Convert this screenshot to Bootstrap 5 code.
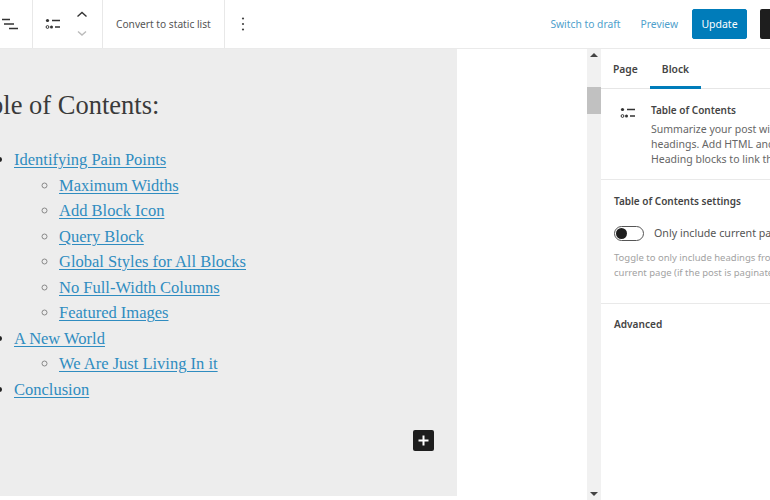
<!DOCTYPE html>
<html lang="en">
<head>
<meta charset="utf-8">
<title>Table of Contents</title>
<link href="https://cdn.jsdelivr.net/npm/bootstrap@5.3.0/dist/css/bootstrap.min.css" rel="stylesheet">
<style>
html,body{height:500px;overflow:hidden;background:#fff}
body{font-family:"Noto Sans",sans-serif;color:#333}
.top-bar{height:49px;border-bottom:1px solid #eaeaea;color:#444;overflow:hidden}
.tool-seg{height:48px;border-right:1px solid #e8e8e8}
.seg-nav{width:33px;padding-left:1px}
.seg-block{width:70px;padding-left:12px;gap:15px}
.seg-convert{width:122px;font-size:10.2px;padding:2px 0 0 13px;color:#555}
.seg-more{width:38px}
.top-link{font-size:10.3px;color:#4f9fcc;padding-top:2px}
.gap-link{margin-right:20px}
.btn.btn-update{background:#007cba;border-color:#007cba;color:#fff;font-size:10.5px;width:55px;height:30px;padding:1px 0 0;border-radius:2px;margin-left:14px}
.black-btn{width:30px;height:30px;background:#1e1e1e;border-radius:2px;margin-left:13px;margin-right:-20px;flex:none}
.work-area{height:451px}
.page-canvas{width:457px;height:447px;background:#ededed;overflow:hidden;flex:none;font-family:"Liberation Serif",serif;position:relative}
.doc-title{font-family:"Liberation Serif",serif;font-size:26.5px;font-weight:400;color:#3a3a3a;margin:42px 0 0 -36px;line-height:28px}
.toc-list{margin:28px 0 0;padding-left:14px;font-size:16.5px;line-height:25.5px}
.toc-list ul{padding-left:45px;margin:0;list-style:circle}
.toc-list li::marker{color:#222}
.toc-list ul li::marker{color:#888}
.toc-list a{color:#2f8cc0;text-decoration:underline;text-underline-offset:2px}
.add-block{position:absolute;left:413px;top:381px;width:21px;height:21px;background:#1e1e1e;border-radius:2px}
.blank-gap{width:130px;flex:none}
.scroll-track{width:14px;background:#f1f1f1;flex:none;height:451px}
.scroll-thumb{height:27px;background:#c1c1c1;margin-top:30px}
.side-panel{flex:1 1 0;min-width:0;overflow:hidden}
.side-inner{width:300px}
.tabs-row{height:40px;border-bottom:1px solid #e6e6e6;font-size:10.3px;font-weight:600;color:#444}
.tab-item{height:40px;line-height:40px}
.tab-page{padding-left:12px;width:49px}
.tab-block{width:51px;text-align:center;border-bottom:3px solid #007cba}
.block-card{height:91px;border-bottom:1px solid #e9e9e9;padding:14px 0 0 19px;gap:15px}
.card-name{font-size:10px;font-weight:600;color:#444;line-height:14px;margin-bottom:5px}
.card-desc{font-size:10.5px;line-height:15px;color:#666}
.settings-box{height:124px;border-bottom:1px solid #e9e9e9;padding:14px 0 0 13px}
.settings-name{font-size:10px;font-weight:600;color:#444;line-height:14px;margin-bottom:17px}
.toggle-pill{width:30px;height:15px;border:1px solid #555;border-radius:8px;flex:none;position:relative}
.toggle-pill::before{content:"";position:absolute;left:1px;top:1px;width:11px;height:11px;border-radius:50%;background:#1e1e1e}
.toggle-label{font-size:10.7px;color:#555;margin-left:10px;line-height:15px;padding-top:1px}
.help-text{font-size:9.5px;line-height:15px;color:#a2a2a2;margin-top:9px}
.adv-row{font-size:10.100px;font-weight:600;color:#444;padding:13px 0 0 13px;line-height:14px}
</style>
</head>
<body>
<div class="top-bar d-flex align-items-center">
  <div class="tool-seg seg-nav d-flex align-items-center">
    <svg width="18" height="14" viewBox="0 0 18 14" fill="none" stroke="#333" stroke-width="1.4"><path d="M1 2.500h8M3 7h10M8 11.500h9"/></svg>
  </div>
  <div class="tool-seg seg-block d-flex align-items-center">
    <svg width="16" height="12" viewBox="0 0 16 12" fill="none"><circle cx="2.500" cy="2.500" r="1.600" fill="#333"/><path d="M7 2.500h8M10 9h5" stroke="#333" stroke-width="1.300"/><circle cx="2.500" cy="9" r="1.400" stroke="#333"/><circle cx="6.500" cy="9" r="1.500" fill="#333"/></svg>
    <svg width="12" height="26" viewBox="0 0 12 26" fill="none" stroke-width="1.400"><path d="M1.500 5.500 6 1.500l4.500 4" stroke="#333"/><path d="M2 20.500l4 3.500 4-3.500" stroke="#bbb"/></svg>
  </div>
  <div class="tool-seg seg-convert d-flex align-items-center">Convert to static list</div>
  <div class="tool-seg seg-more d-flex align-items-center border-0 ps-3">
    <svg width="4" height="16" viewBox="0 0 4 16" fill="#444"><circle cx="2" cy="2.500" r="1.100"/><circle cx="2" cy="8" r="1.100"/><circle cx="2" cy="13.500" r="1.100"/></svg>
  </div>
  <div class="ms-auto d-flex align-items-center">
    <span class="top-link gap-link">Switch to draft</span>
    <span class="top-link">Preview</span>
    <button class="btn btn-update" type="button">Update</button>
    <span class="black-btn"></span>
  </div>
</div>
<div class="work-area d-flex">
  <div class="page-canvas">
    <h1 class="doc-title text-nowrap">Table of Contents:</h1>
    <ul class="toc-list">
      <li><a href="#">Identifying Pain Points</a>
        <ul>
          <li><a href="#">Maximum Widths</a></li>
          <li><a href="#">Add Block Icon</a></li>
          <li><a href="#">Query Block</a></li>
          <li><a href="#">Global Styles for All Blocks</a></li>
          <li><a href="#">No Full-Width Columns</a></li>
          <li><a href="#">Featured Images</a></li>
        </ul>
      </li>
      <li><a href="#">A New World</a>
        <ul>
          <li><a href="#">We Are Just Living In it</a></li>
        </ul>
      </li>
      <li><a href="#">Conclusion</a></li>
    </ul>
    <span class="add-block d-flex align-items-center justify-content-center">
      <svg width="11" height="11" viewBox="0 0 11 11" stroke="#fff" stroke-width="2"><path d="M5.500 0.500v10M0.500 5.500h10"/></svg>
    </span>
  </div>
  <div class="blank-gap"></div>
  <div class="scroll-track d-flex flex-column">
    <svg class="mx-auto mt-1" width="8" height="4" viewBox="0 0 8 4" fill="#444"><path d="M0 4 4 0l4 4z"/></svg>
    <div class="scroll-thumb"></div>
    <svg class="mx-auto mt-auto mb-1" width="8" height="4" viewBox="0 0 8 4" fill="#444"><path d="M0 0 4 4l4-4z"/></svg>
  </div>
  <div class="side-panel">
    <div class="side-inner">
      <div class="tabs-row d-flex">
        <div class="tab-item tab-page">Page</div>
        <div class="tab-item tab-block">Block</div>
      </div>
      <div class="block-card d-flex">
        <svg class="flex-none mt-1" width="16" height="12" viewBox="0 0 16 12" fill="none"><circle cx="2.500" cy="2.500" r="1.600" fill="#333"/><path d="M7 2.500h8M10 9h5" stroke="#333" stroke-width="1.300"/><circle cx="2.500" cy="9" r="1.400" stroke="#333"/><circle cx="6.500" cy="9" r="1.500" fill="#333"/></svg>
        <div>
          <div class="card-name">Table of Contents</div>
          <div class="card-desc text-nowrap">Summarize your post with a list of<br>headings. Add HTML anchors to<br>Heading blocks to link them here.</div>
        </div>
      </div>
      <div class="settings-box">
        <div class="settings-name">Table of Contents settings</div>
        <div class="d-flex align-items-center">
          <span class="toggle-pill"></span>
          <span class="toggle-label text-nowrap">Only include current page</span>
        </div>
        <div class="help-text text-nowrap">Toggle to only include headings from the<br>current page (if the post is paginated).</div>
      </div>
      <div class="adv-row">Advanced</div>
    </div>
  </div>
</div>
<script src="https://cdn.jsdelivr.net/npm/bootstrap@5.3.0/dist/js/bootstrap.bundle.min.js"></script>
</body>
</html>
